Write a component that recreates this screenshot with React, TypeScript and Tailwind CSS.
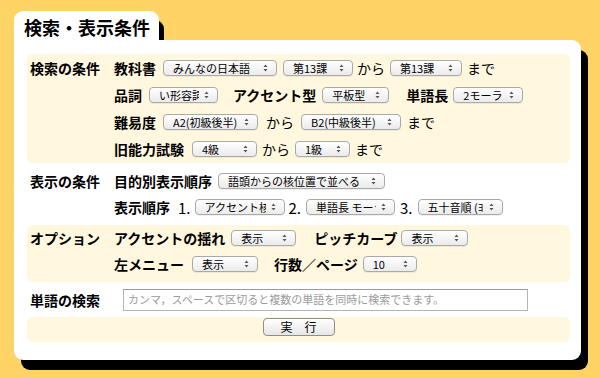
import React from "react";

const Sel = ({
  className,
  pad = "pr-[18px]",
  children,
}: {
  className: string;
  pad?: string;
  children: React.ReactNode;
}) => (
  <div
    className={`relative flex h-[16px] shrink-0 items-center rounded-[4px] border border-[#a9a9a9] bg-linear-to-b from-white to-[#ebebeb] pl-[9px] ${pad} text-[11px] text-black shadow-[0_1px_0_rgba(0,0,0,0.06)] ${className}`}
  >
    <span className="block overflow-hidden whitespace-nowrap leading-[14px]">{children}</span>
    <svg
      className="absolute right-[8px] top-1/2 -translate-y-1/2"
      width="5"
      height="8"
      viewBox="0 0 5 8"
    >
      <path d="M2.5 0.5L4.5 3H0.5z M2.5 7.5L0.5 5h4z" fill="#555" />
    </svg>
  </div>
);

const B = ({ children, className = "" }: { children: React.ReactNode; className?: string }) => (
  <span className={`font-bold whitespace-nowrap ${className}`}>{children}</span>
);

const T = ({ children, className = "" }: { children: React.ReactNode; className?: string }) => (
  <span className={`whitespace-nowrap ${className}`}>{children}</span>
);

export default function App() {
  return (
    <div
      className="h-[378px] w-[600px] overflow-hidden bg-[#ffd366] pl-[14px] pt-[11px] text-black"
      style={{ fontFamily: '"Noto Sans CJK JP", "Noto Sans", sans-serif' }}
    >
      {/* tab */}
      <div className="relative flex h-[29px] w-[145px] items-center rounded-t-[9px] bg-white pl-[10px] pt-[3px] text-[18px] font-bold leading-none shadow-[5px_9px_0_#000]">
        検索・表示条件
      </div>
      {/* panel */}
      <div className="relative h-[320px] w-[567px] rounded-[9px] rounded-tl-none bg-white pl-[13px] pr-[11px] pt-[14px] shadow-[7px_10px_0_#000]">
        {/* section 1 */}
        <div className="flex rounded-[6px] bg-[#fff8de] pb-[1px] pl-[3px] text-[14px] leading-none">
          <div className="flex h-[27px] w-[84px] shrink-0 items-center">
            <B>検索の条件</B>
          </div>
          <div className="flex flex-col">
            <div className="flex h-[27px] items-center">
              <B>教科書</B>
              <Sel className="ml-[7px] w-[114px]">みんなの日本語</Sel>
              <Sel className="ml-[6px] w-[70px]">第13課</Sel>
              <T className="ml-[4px]">から</T>
              <Sel className="ml-[5px] w-[72px]">第13課</Sel>
              <T className="ml-[5px]">まで</T>
            </div>
            <div className="flex h-[27px] items-center">
              <B>品詞</B>
              <Sel className="ml-[7px] w-[69px]">い形容詞</Sel>
              <B className="ml-[15px]">アクセント型</B>
              <Sel className="ml-[6px] w-[67px]">平板型</Sel>
              <B className="ml-[17px]">単語長</B>
              <Sel className="ml-[5px] w-[70px]" pad="pr-[14px]">2モーラ</Sel>
            </div>
            <div className="flex h-[27px] items-center">
              <B>難易度</B>
              <Sel className="ml-[7px] w-[95px]" pad="pr-[14px]">A2(初級後半)</Sel>
              <T className="ml-[8px]">から</T>
              <Sel className="ml-[7px] w-[100px]" pad="pr-[14px]">B2(中級後半)</Sel>
              <T className="ml-[6px]">まで</T>
            </div>
            <div className="flex h-[27px] items-center">
              <B>旧能力試験</B>
              <Sel className="ml-[8px] w-[65px]">4級</Sel>
              <T className="ml-[5px]">から</T>
              <Sel className="ml-[5px] w-[55px]">1級</Sel>
              <T className="ml-[5px]">まで</T>
            </div>
          </div>
        </div>

        {/* section 2 */}
        <div className="flex pb-[5px] pl-[3px] pt-[5px] text-[14px] leading-none">
          <div className="flex h-[26px] w-[84px] shrink-0 items-center">
            <B>表示の条件</B>
          </div>
          <div className="flex flex-col">
            <div className="flex h-[26px] items-center">
              <B>目的別表示順序</B>
              <Sel className="ml-[6px] w-[167px]">語頭からの核位置で並べる</Sel>
            </div>
            <div className="flex h-[26px] items-center">
              <B>表示順序</B>
              <T className="ml-[8px] text-[15px]">1.</T>
              <Sel className="ml-[4px] w-[90px]">アクセント核</Sel>
              <T className="ml-[4px] text-[15px]">2.</T>
              <Sel className="ml-[5px] w-[89px]">単語長 モーラ</Sel>
              <T className="ml-[5px] text-[15px]">3.</T>
              <Sel className="ml-[5px] w-[85px]">五十音順 (ﾖﾐ)</Sel>
            </div>
          </div>
        </div>

        {/* section 3 */}
        <div className="flex rounded-[6px] bg-[#fff8de] pb-[5px] pl-[3px] text-[14px] leading-none">
          <div className="flex h-[26px] w-[84px] shrink-0 items-center">
            <B>オプション</B>
          </div>
          <div className="flex flex-col">
            <div className="flex h-[26px] items-center">
              <B>アクセントの揺れ</B>
              <Sel className="ml-[6px] w-[65px]">表示</Sel>
              <B className="ml-[18px]">ピッチカーブ</B>
              <Sel className="ml-[4px] w-[67px]">表示</Sel>
            </div>
            <div className="flex h-[26px] items-center">
              <B>左メニュー</B>
              <Sel className="ml-[8px] w-[66px]">表示</Sel>
              <B className="ml-[16px]">行数／ページ</B>
              <Sel className="ml-[5px] w-[54px]">10</Sel>
            </div>
          </div>
        </div>

        {/* section 4 */}
        <div className="flex h-[35px] items-center pl-[3px] text-[14px] leading-none">
          <div className="w-[93px] shrink-0">
            <B>単語の検索</B>
          </div>
          <div className="flex h-[22px] w-[405px] items-center border border-[#b4b4b4] border-t-[#9a9a9a] bg-white pl-[4px] text-[11px] text-[#9b9b9b]">
            カンマ，スペースで区切ると複数の単語を同時に検索できます。
          </div>
        </div>

        {/* section 5 */}
        <div className="flex h-[25px] justify-center rounded-[6px] bg-[#fff8de] pt-[1px]">
          <button className="flex h-[18px] w-[72px] items-center justify-center rounded-[4px] border border-[#8e8e8e] bg-linear-to-b from-white to-[#e6e6e6] text-[12px] leading-none text-black">
            実　行
          </button>
        </div>
      </div>
    </div>
  );
}
